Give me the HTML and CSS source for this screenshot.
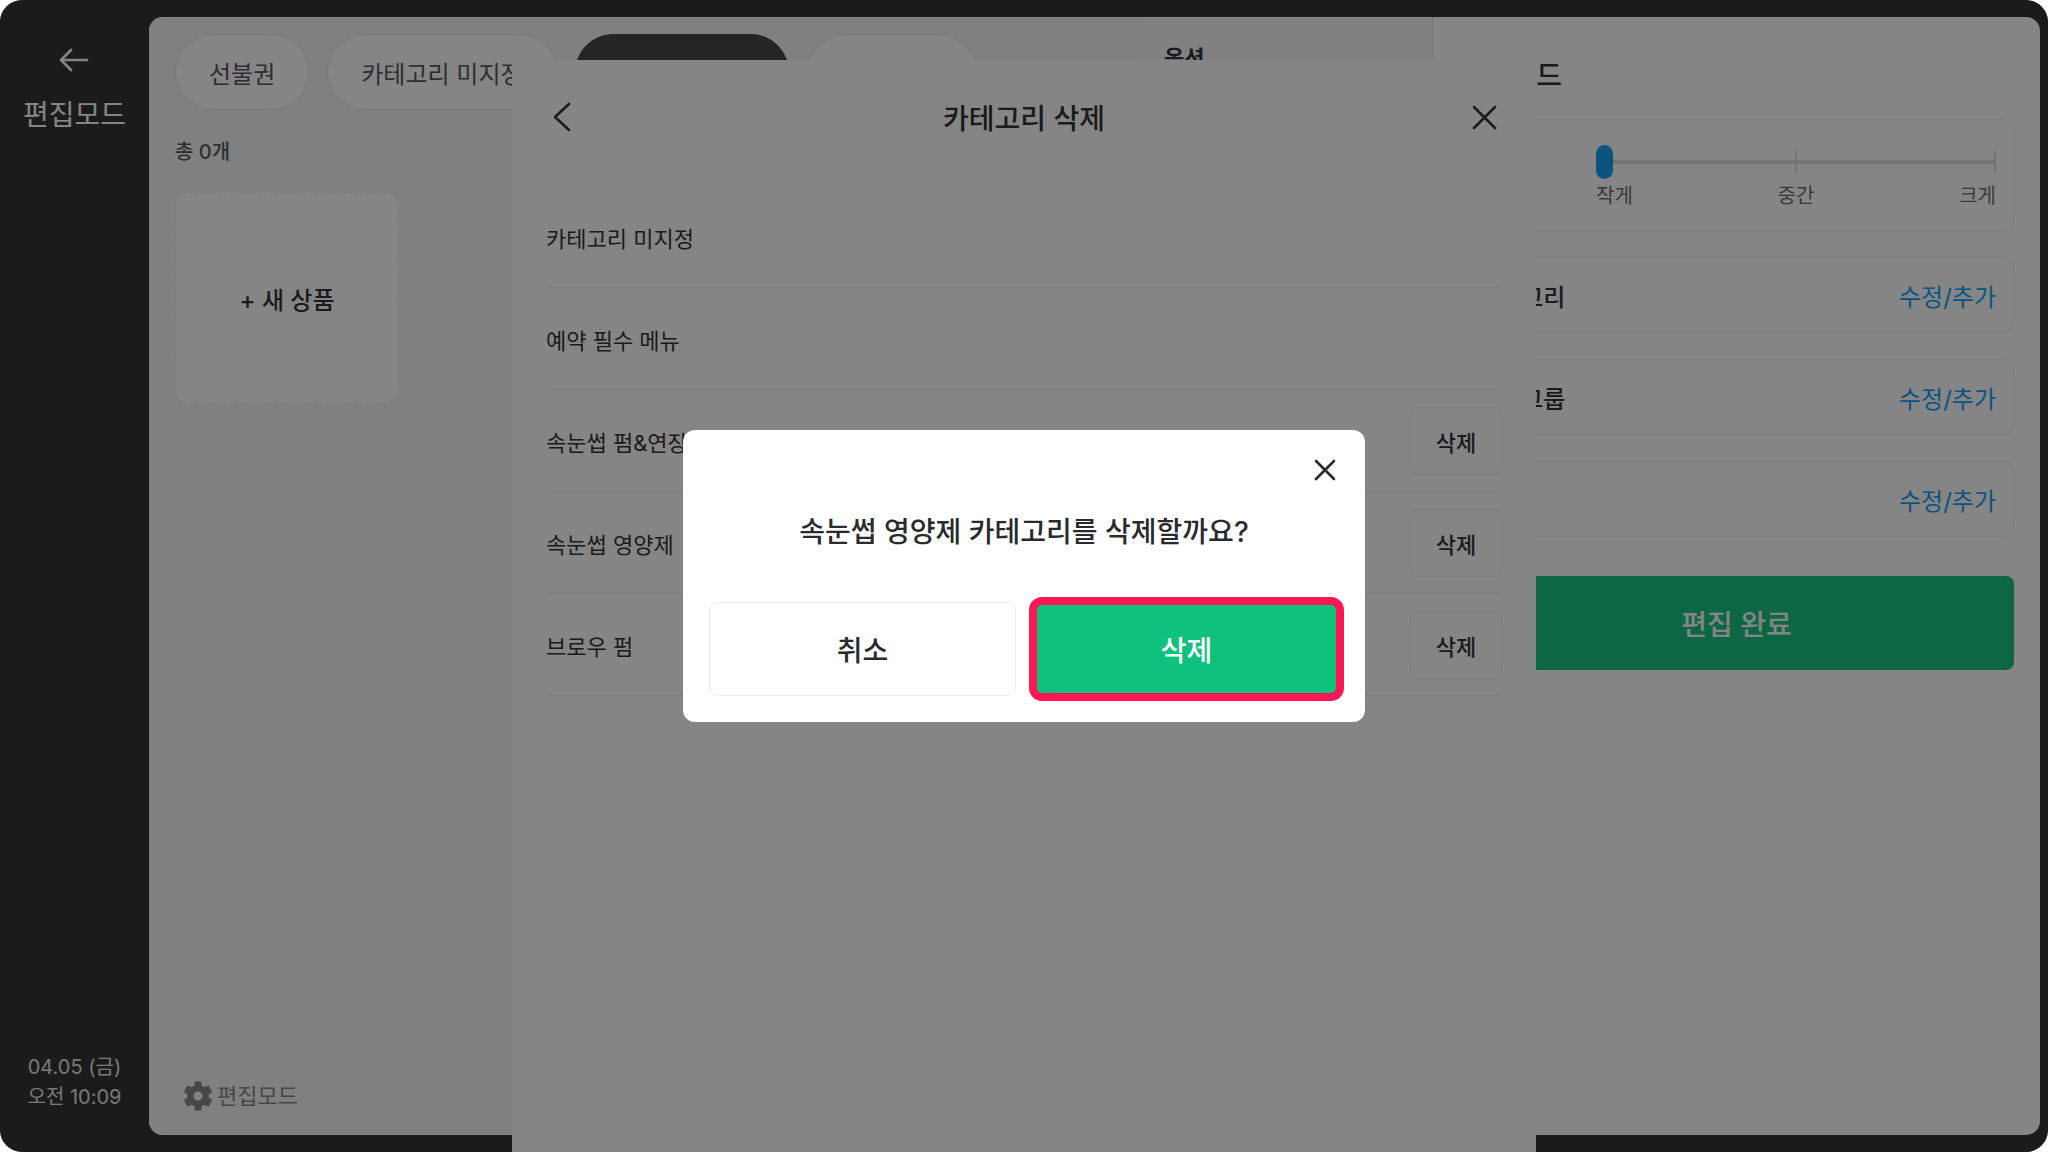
FILE: index.html
```html
<!DOCTYPE html>
<html lang="ko">

<head>
    <meta charset="UTF-8">
    <meta name="viewport" content="width=device-width, initial-scale=1.0">
    <title>편집모드</title>
    <link rel="stylesheet" href="styles.css">
</head>

<body>
    <div class="app">
        <aside class="sidebar">
            <div class="sidebar-top">
                <button class="icon-btn back-btn" aria-label="뒤로">
                    <svg width="30" height="24" viewBox="0 0 30 24">
                        <path d="M12 2L2 12l10 10M2 12h26" />
                    </svg>
                </button>
                <h1>편집모드</h1>
            </div>
            <div class="clock">
                <span>04.05 (금)</span>
                <span>오전 10:09</span>
            </div>
        </aside>

        <div class="board">
            <main class="products">
                <nav class="tabs">
                    <button class="tab">선불권</button>
                    <button class="tab">카테고리 미지정</button>
                    <button class="tab active">예약 필수 메뉴</button>
                    <button class="tab tab-last">브로우 펌</button>
                </nav>
                <p class="count">총 0개</p>
                <button class="new-product">+ 새 상품</button>
                <a href="#" class="mode-link">
                    <svg width="34" height="34" viewBox="0 0 24 24">
                        <path d="M19.4 13c.1-.3.1-.7.1-1s0-.7-.1-1l2.3-1.7c.2-.2.3-.5.1-.7l-2.1-3.7c-.1-.2-.4-.3-.7-.2l-2.6 1.1c-.6-.4-1.1-.8-1.8-1l-.4-2.7c0-.3-.2-.5-.5-.5h-3.400c-.3 0-.5.2-.5.5l-.4 2.7c-.6.2-1.2.6-1.8 1L5 4.700c-.2-.1-.5 0-.7.2L2.200 8.600c-.1.2-.1.5.1.7L4.600 11c-.1.3-.1.7-.1 1s0 .7.1 1l-2.3 1.7c-.2.2-.2.5-.1.7l2.1 3.7c.1.2.4.3.7.2l2.6-1.1c.6.4 1.2.8 1.8 1l.4 2.7c0 .3.2.5.5.5h3.400c.3 0 .5-.2.5-.5l.4-2.7c.6-.2 1.2-.6 1.8-1l2.6 1.1c.2.1.5 0 .7-.2l2.1-3.7c.1-.2.1-.5-.1-.7zM12 15.200a3.200 3.200 0 1 1 0-6.400 3.200 3.200 0 0 1 0 6.400z" />
                    </svg>
                    편집모드
                </a>
            </main>

            <section class="options">
                <h2>옵션</h2>
            </section>

            <section class="settings">
                <h2>편집모드</h2>
                <div class="setting size-setting">
                    <label for="size">크기</label>
                    <div class="size-control">
                        <input type="range" id="size" min="0" max="2" value="0">
                        <div class="size-labels">
                            <span>작게</span>
                            <span>중간</span>
                            <span>크게</span>
                        </div>
                    </div>
                </div>
                <div class="setting">
                    <span>카테고리</span>
                    <a href="#">수정/추가</a>
                </div>
                <div class="setting">
                    <span>옵션그룹</span>
                    <a href="#">수정/추가</a>
                </div>
                <div class="setting">
                    <span>옵션</span>
                    <a href="#">수정/추가</a>
                </div>
                <button class="done-btn">편집 완료</button>
            </section>
        </div>

        <section class="modal">
            <header class="modal-header">
                <button class="icon-btn" aria-label="이전">
                    <svg width="36" height="36" viewBox="0 0 36 36">
                        <path d="M23 5L9 18l14 13" />
                    </svg>
                </button>
                <h2>카테고리 삭제</h2>
                <button class="icon-btn" aria-label="닫기">
                    <svg width="36" height="36" viewBox="0 0 36 36">
                        <path d="M8 8l21 21M29 8L8 29" />
                    </svg>
                </button>
            </header>
            <ul class="category-list">
                <li>카테고리 미지정</li>
                <li>예약 필수 메뉴</li>
                <li>속눈썹 펌&amp;연장 <button class="delete-btn">삭제</button></li>
                <li>속눈썹 영양제 <button class="delete-btn">삭제</button></li>
                <li>브로우 펌 <button class="delete-btn">삭제</button></li>
            </ul>
        </section>

        <div class="overlay">
            <div class="dialog" role="dialog" aria-labelledby="dialog-title">
                <button class="icon-btn dialog-close" aria-label="닫기">
                    <svg width="28" height="28" viewBox="0 0 28 28">
                        <path d="M5 5l18 18M23 5L5 23" />
                    </svg>
                </button>
                <h2 id="dialog-title">속눈썹 영양제 카테고리를 삭제할까요?</h2>
                <div class="dialog-buttons">
                    <button class="btn btn-cancel">취소</button>
                    <button class="btn btn-delete">삭제</button>
                </div>
            </div>
        </div>
    </div>
</body>

</html>
```

FILE: styles.css
```css
* {
    margin: 0;
    padding: 0;
    box-sizing: border-box;
}

body {
    font-family: Inter, "Noto Sans CJK KR", sans-serif;
    font-size: 24px;
    color: #2a2a2c;
    background: #fff;
}

button {
    font: inherit;
    color: inherit;
    border: none;
    background: none;
    cursor: pointer;
}

a {
    color: inherit;
    text-decoration: none;
}

ul {
    list-style: none;
}

.app {
    position: relative;
    display: flex;
    height: 100vh;
    padding: 17px 8px 17px 0;
    background: #2b2b2d;
    border-radius: 22px;
    overflow: hidden;
}

.icon-btn {
    display: flex;
}

.icon-btn svg {
    fill: none;
    stroke: currentColor;
    stroke-width: 2.6;
    stroke-linecap: round;
    stroke-linejoin: round;
}

/* sidebar */
.sidebar {
    width: 149px;
    display: flex;
    flex-direction: column;
    justify-content: space-between;
    align-items: center;
    padding: 31px 0 23px;
    color: #fff;
}

.sidebar-top {
    display: flex;
    flex-direction: column;
    align-items: center;
    gap: 23px;
}

.sidebar h1 {
    font-size: 28px;
    font-weight: 400;
    line-height: 40px;
}

.clock {
    display: flex;
    flex-direction: column;
    align-items: center;
    font-size: 20px;
    line-height: 30px;
    color: #e4e4e4;
}

/* board */
.board {
    flex: 1;
    display: flex;
    background: #fff;
    border-radius: 14px;
    overflow: hidden;
}

.products {
    flex: 1;
    min-width: 0;
    display: flex;
    flex-direction: column;
    align-items: flex-start;
    padding: 17px 26px 22px;
    background: #f2f5f7;
}

.tabs {
    display: flex;
    gap: 18px;
}

.tab {
    height: 76px;
    padding: 0 33px;
    background: #fff;
    border: 1px solid #e4e7ea;
    border-radius: 38px;
    color: #505155;
    white-space: nowrap;
}

.tab.active {
    background: #3a3e41;
    border-color: #3a3e41;
    color: #fff;
}

.tab-last {
    min-width: 170px;
}

.count {
    margin: 27px 0 25px;
    font-size: 20px;
    font-weight: 500;
    line-height: 30px;
    color: #505155;
}

.new-product {
    width: 224px;
    height: 212px;
    background: #fff;
    border: 1px dashed #e4e7ea;
    border-radius: 14px;
    font-weight: 500;
}

.mode-link {
    margin-top: auto;
    padding-left: 6px;
    display: flex;
    align-items: center;
    gap: 2px;
    font-size: 22px;
    line-height: 32px;
    color: #808286;
}

.mode-link svg {
    fill: currentColor;
}

.options {
    width: 296px;
    padding: 25px 27px;
    background: #f6f6fa;
    border-right: 1px solid #e4e4e8;
}

.options h2 {
    font-size: 22px;
    font-weight: 700;
    line-height: 32px;
}

.settings {
    width: 607px;
    display: flex;
    flex-direction: column;
    gap: 26px;
    padding: 39px 26px;
}

.settings h2 {
    margin-bottom: -3px;
    font-size: 28px;
    font-weight: 500;
    line-height: 40px;
}

.setting {
    display: flex;
    justify-content: space-between;
    align-items: center;
    height: 76px;
    padding: 0 17px;
    border: 1px solid #eceef0;
    border-radius: 10px;
    font-weight: 500;
}

.setting a {
    color: #0c9cf5;
    font-weight: 400;
}

.size-setting {
    height: 112px;
}

.size-control {
    width: 400px;
    padding-top: 5px;
}

.size-labels {
    display: flex;
    justify-content: space-between;
    margin-top: 3px;
    font-size: 20px;
    font-weight: 400;
    line-height: 28px;
    color: #66686c;
}

input[type="range"] {
    display: block;
    width: 100%;
    height: 34px;
    appearance: none;
    background:
        linear-gradient(#dcdcde, #dcdcde) center / 100% 4px no-repeat,
        linear-gradient(#dcdcde, #dcdcde) center / 2px 22px no-repeat,
        linear-gradient(#dcdcde, #dcdcde) right / 2px 22px no-repeat;
}

input[type="range"]::-webkit-slider-thumb {
    appearance: none;
    width: 17px;
    height: 34px;
    background: #0c9cf5;
    border-radius: 9px;
}

.done-btn {
    height: 94px;
    margin-top: 13px;
    background: #0ec17d;
    border-radius: 8px;
    color: #fff;
    font-size: 28px;
    font-weight: 500;
}

/* category modal */
.modal {
    position: absolute;
    top: 60px;
    bottom: 0;
    left: 25%;
    width: 50%;
    padding: 0 34px;
    background: #fff;
}

.modal-header {
    display: flex;
    justify-content: space-between;
    align-items: center;
    height: 114px;
    margin-bottom: 12px;
}

.modal-header h2 {
    font-size: 28px;
    font-weight: 500;
}

.category-list li {
    display: flex;
    justify-content: space-between;
    align-items: center;
    height: 102px;
    border-bottom: 1px solid #eceef0;
    font-size: 22px;
}

.delete-btn {
    width: 92px;
    height: 68px;
    border: 1px solid #eceef0;
    border-radius: 8px;
    font-weight: 500;
}

/* confirm dialog */
.overlay {
    position: absolute;
    inset: 0;
    display: flex;
    justify-content: center;
    align-items: center;
    background: rgba(11, 11, 11, 0.5);
}

.dialog {
    width: 682px;
    padding: 26px;
    background: #fff;
    border-radius: 12px;
}

.dialog-close {
    margin-left: auto;
}

.dialog h2 {
    margin: 28px 0 50px;
    text-align: center;
    font-size: 28px;
    font-weight: 500;
    line-height: 40px;
}

.dialog-buttons {
    display: flex;
    gap: 18px;
}

.btn {
    flex: 1;
    height: 94px;
    border-radius: 8px;
    font-size: 28px;
    font-weight: 500;
}

.btn-cancel {
    border: 1px solid #eceef0;
}

.btn-delete {
    background: #0ec17d;
    color: #fff;
    outline: 8px solid #ff1654;
    outline-offset: -3px;
}
```
